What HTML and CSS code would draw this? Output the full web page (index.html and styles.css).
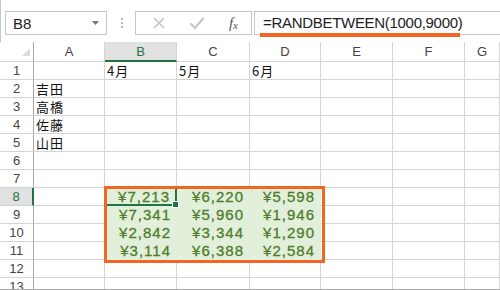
FILE: index.html
```html
<!DOCTYPE html>
<html>
<head>
    <title>RANDBETWEEN</title>
    <link rel="stylesheet" href="styles.css">
</head>
<body>
    <div class="toolbar">
        <div class="namebox">
            <span>B8</span>
            <svg class="drop" width="7" height="4" viewBox="0 0 7 4"><path d="M0 0h7L3.5 4z" fill="#777"/></svg>
        </div>
        <div class="grip"><i></i><i></i><i></i></div>
        <div class="iconbox">
            <svg width="14" height="14" viewBox="0 0 14 14"><path d="M2 2l10 10M12 2L2 12" stroke="#c4c4c4" stroke-width="1.6"/></svg>
            <svg width="16" height="14" viewBox="0 0 16 14"><path d="M1.5 7.5l4.5 4.5L14.5 2" stroke="#c4c4c4" stroke-width="2.2" fill="none"/></svg>
            <span class="fx">f<sub>x</sub></span>
        </div>
        <div class="formula">=RANDBETWEEN(1000,9000)<span class="mark"></span></div>
    </div>

    <div class="sheet">
        <div class="grid">
            <div class="hd corner"><span class="tri"></span></div>
            <div class="hd">A</div>
            <div class="hd sel-col">B</div>
            <div class="hd">C</div>
            <div class="hd">D</div>
            <div class="hd">E</div>
            <div class="hd">F</div>
            <div class="hd">G</div>

            <div class="rh">1</div><div class="c"></div><div class="c">4月</div><div class="c">5月</div><div class="c">6月</div><div class="c"></div><div class="c"></div><div class="c"></div>
            <div class="rh">2</div><div class="c">吉田</div><div class="c"></div><div class="c"></div><div class="c"></div><div class="c"></div><div class="c"></div><div class="c"></div>
            <div class="rh">3</div><div class="c">高橋</div><div class="c"></div><div class="c"></div><div class="c"></div><div class="c"></div><div class="c"></div><div class="c"></div>
            <div class="rh">4</div><div class="c">佐藤</div><div class="c"></div><div class="c"></div><div class="c"></div><div class="c"></div><div class="c"></div><div class="c"></div>
            <div class="rh">5</div><div class="c">山田</div><div class="c"></div><div class="c"></div><div class="c"></div><div class="c"></div><div class="c"></div><div class="c"></div>
            <div class="rh">6</div><div class="c"></div><div class="c"></div><div class="c"></div><div class="c"></div><div class="c"></div><div class="c"></div><div class="c"></div>
            <div class="rh">7</div><div class="c"></div><div class="c"></div><div class="c"></div><div class="c"></div><div class="c"></div><div class="c"></div><div class="c"></div>
            <div class="rh sel-row">8</div><div class="c"></div><div class="c num on active">¥7,213<span class="handle"></span></div><div class="c num on">¥6,220</div><div class="c num on">¥5,598</div><div class="c"></div><div class="c"></div><div class="c"></div>
            <div class="rh">9</div><div class="c"></div><div class="c num on">¥7,341</div><div class="c num on">¥5,960</div><div class="c num on">¥1,946</div><div class="c"></div><div class="c"></div><div class="c"></div>
            <div class="rh">10</div><div class="c"></div><div class="c num on">¥2,842</div><div class="c num on">¥3,344</div><div class="c num on">¥1,290</div><div class="c"></div><div class="c"></div><div class="c"></div>
            <div class="rh">11</div><div class="c"></div><div class="c num on">¥3,114</div><div class="c num on">¥6,388</div><div class="c num on">¥2,584</div><div class="c"></div><div class="c"></div><div class="c"></div>
            <div class="rh">12</div><div class="c"></div><div class="c"></div><div class="c"></div><div class="c"></div><div class="c"></div><div class="c"></div><div class="c"></div>
            <div class="rh">13</div><div class="c"></div><div class="c"></div><div class="c"></div><div class="c"></div><div class="c"></div><div class="c"></div><div class="c"></div>
        </div>
        <div class="range"></div>
    </div>
</body>
</html>
```

FILE: styles.css
```css
body { margin: 0; background: #fff; font-family: "Noto Sans CJK JP", sans-serif; overflow: hidden; }

.toolbar { height: 42px; display: flex; align-items: flex-start; padding-top: 11px; box-sizing: border-box; border-left: 1px solid #c6c6c6; }
.namebox { width: 102px; height: 24px; margin-left: 4px; border: 1px solid #c6c6c6; box-sizing: border-box; display: flex; align-items: center; justify-content: space-between; padding: 0 7px 0 7px; font-family: "Liberation Sans", sans-serif; font-size: 15px; color: #222; }
.grip { width: 26px; height: 24px; display: flex; flex-direction: column; align-items: center; justify-content: center; gap: 2px; margin-left: 2px; }
.grip i { width: 2px; height: 2px; background: #b4b4b4; }
.iconbox { width: 117px; height: 24px; border: 1px solid #c6c6c6; box-sizing: border-box; display: flex; align-items: center; justify-content: space-between; padding: 0 13px 0 16px; }
.fx { font-family: "Liberation Serif", serif; font-style: italic; font-size: 15px; color: #555; line-height: 1; }
.fx sub { font-size: 11px; vertical-align: -1px; }
.formula { flex: 1; height: 24px; margin-left: 2px; border: 1px solid #c6c6c6; border-right: 0; box-sizing: border-box; position: relative; padding: 0 0 0 8px; font-family: "Liberation Sans", sans-serif; font-size: 15px; line-height: 22px; color: #222; letter-spacing: -0.3px; }
.mark { position: absolute; left: 5px; top: 21px; width: 200px; height: 4px; background: #f26522; }

.sheet { position: relative; height: 247px; border-bottom: 1px solid #a8a8a8; overflow: hidden; }
.grid { display: grid; grid-template-columns: 34px 71px 72px 73px 71px 72px 72px 35px; grid-template-rows: 20px repeat(13, 18px); }
.grid > div { box-sizing: border-box; border-right: 1px solid #d4d4d4; border-bottom: 1px solid #d4d4d4; }

.hd { display: flex; align-items: center; justify-content: center; font-family: "Liberation Sans", sans-serif; font-size: 13px; color: #444; }
.corner { position: relative; border-right-color: #a8a8a8 !important; }
.tri { position: absolute; right: 3px; bottom: 5px; width: 0; height: 0; border-left: 8px solid transparent; border-bottom: 8px solid #dcdcdc; }
.sel-col { background: #e1e1e1; color: #217346; border-bottom: 2px solid #217346 !important; }

.rh { display: flex; align-items: center; justify-content: center; font-family: "Liberation Sans", sans-serif; font-size: 13px; color: #444; border-right-color: #a8a8a8 !important; }
.sel-row { background: #e1e1e1; color: #217346; border-right: 2px solid #217346 !important; }

.c { font-size: 13px; letter-spacing: 1px; line-height: 17px; padding-left: 2px; color: #111; white-space: nowrap; }
.num { text-align: right; padding-right: 5px; color: #4f7d2c; font-family: "Liberation Sans", sans-serif; font-size: 15px; letter-spacing: 1px; -webkit-text-stroke: 0.3px #4f7d2c; }
.on { background: #e2efda; border-color: #e2efda !important; }
.active { position: relative; border-right: 2px solid #217346 !important; border-bottom: 2px solid #217346 !important; }
.handle { position: absolute; right: -4px; bottom: -4px; width: 5px; height: 5px; background: #217346; border: 1px solid #fff; }

.range { position: absolute; left: 104px; top: 144px; width: 221px; height: 77px; border: 3px solid #f26522; box-sizing: border-box; }
```
